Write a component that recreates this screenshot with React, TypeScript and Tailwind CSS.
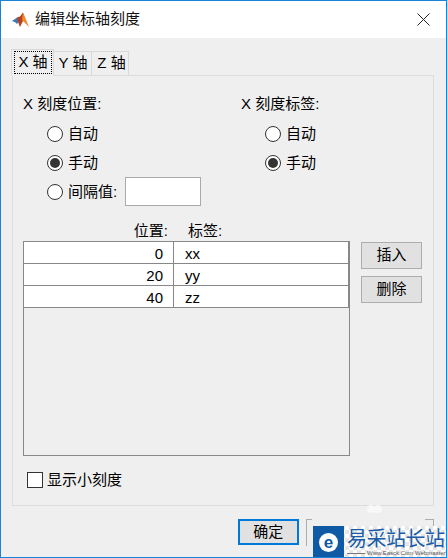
import React from "react";

const font = "font-['Liberation_Sans','Noto_Sans_CJK_SC',sans-serif]";

const Radio = ({ checked, label }: { checked?: boolean; label: string }) => (
  <div className="flex h-[17px] items-center gap-[5px] text-[15px] leading-none text-black">
    <span className="flex size-[16px] items-center justify-center rounded-full border border-[#333] bg-white">
      {checked && <span className="size-[10px] rounded-full bg-[#333]" />}
    </span>
    <span>{label}</span>
  </div>
);

const Row = ({ pos, tag }: { pos: string; tag: string }) => (
  <div className="flex h-[22px] border-b border-r border-[#888] bg-white text-[15px] leading-[23px] text-black">
    <div className="w-[150px] shrink-0 border-r border-[#888] pr-[10px] text-right">{pos}</div>
    <div className="pl-[11px]">{tag}</div>
  </div>
);

const Logo = () => (
  <svg width="17" height="16" viewBox="0 0 17 16">
    <path d="M0 9 L5 5.5 L8 7.5 L5 12 L3.5 10.5 Z" fill="#3a7cb5" />
    <path d="M5 5.5 L8 4.5 L11 0.5 L12 7 L8 15 L6 10 Z" fill="#b8401f" />
    <path d="M11 0.5 L13 5 L17 15 L13 11 L10 8 Z" fill="#ee8a2c" />
  </svg>
);

export default function App() {
  return (
    <div className={`${font} relative flex h-[558px] w-[447px] flex-col overflow-hidden border border-[#1883d7] bg-[#efefef]`}>
      <div className="flex h-[37px] shrink-0 items-center bg-white pl-[11px] pr-[8px]">
        <Logo />
        <span className="ml-[6px] text-[15px] text-[#111]">编辑坐标轴刻度</span>
        <svg className="ml-auto mr-[8px]" width="13" height="13" viewBox="0 0 13 13">
          <path d="M0.5 0.5 L12.5 12.5 M12.5 0.5 L0.5 12.5" stroke="#222" strokeWidth="1" />
        </svg>
      </div>

      <div className="flex flex-col pl-[11px] pr-[12px] pt-[11px]">
        <div className="-ml-px flex h-[26px] items-end text-[15px] text-black">
          <div className="z-10 -mb-px flex h-[27px] w-[43px] items-center justify-center border border-[#d9d9d9] border-b-[#efefef] bg-[#efefef]">
            <span className="flex h-[23px] w-[38px] items-center justify-center whitespace-nowrap border border-dotted border-black pl-px">X 轴</span>
          </div>
          <div className="flex h-[24px] w-[38px] items-center justify-center whitespace-nowrap border border-l-0 border-b-0 border-[#d9d9d9] pl-px">Y 轴</div>
          <div className="flex h-[24px] w-[37px] items-center justify-center whitespace-nowrap border border-l-0 border-b-0 border-[#d9d9d9] pl-[3px]">Z 轴</div>
        </div>

        <div className="flex h-[431px] flex-col border border-[#dcdcdc] pl-[10px] pr-[11px]">
          <div className="flex pt-[18px]">
            <div className="w-[218px]">
              <div className="h-[20px] text-[15px] leading-[20px] text-black">X 刻度位置:</div>
              <div className="mt-[11px] flex flex-col pl-[24px]">
                <Radio label="自动" />
                <div className="mt-[12px]"><Radio checked label="手动" /></div>
                <div className="mt-[6px] flex items-center">
                  <Radio label="间隔值:" />
                  <div className="ml-[8px] h-[29px] w-[76px] border border-[#aaa] bg-white" />
                </div>
              </div>
            </div>
            <div>
              <div className="h-[20px] text-[15px] leading-[20px] text-black">X 刻度标签:</div>
              <div className="mt-[11px] flex flex-col pl-[24px]">
                <Radio label="自动" />
                <div className="mt-[12px]"><Radio checked label="手动" /></div>
              </div>
            </div>
          </div>

          <div className="mt-[16px] flex h-[17px] text-[15px] leading-[17px] text-black">
            <div className="w-[145px] text-right">位置:</div>
            <div className="ml-[20px]">标签:</div>
          </div>

          <div className="mt-[2px] flex">
            <div className="h-[215px] w-[327px] shrink-0 border border-[#888]">
              <Row pos="0" tag="xx" />
              <Row pos="20" tag="yy" />
              <Row pos="40" tag="zz" />
            </div>
            <div className="ml-[11px] flex flex-col gap-[7px] pt-px">
              <button className="h-[27px] w-[61px] border border-[#adadad] bg-[#e1e1e1] text-[15px] text-black">插入</button>
              <button className="h-[27px] w-[61px] border border-[#adadad] bg-[#e1e1e1] text-[15px] text-black">删除</button>
            </div>
          </div>

          <div className="mt-[13px] flex items-center gap-[4px] pl-[4px] text-[15px] text-black">
            <span className="size-[16px] border border-[#333] bg-white" />
            <span>显示小刻度</span>
          </div>
        </div>

        <div className="mt-[13px] flex">
          <button className="ml-[226px] h-[26px] w-[61px] border-2 border-[#0078d7] bg-[#e1e1e1] text-[15px] text-black">确定</button>
          <div className="relative ml-[7px] h-[27px] w-[129px] border-x border-[#adadad]">
            <span className="absolute left-0 top-0 h-px w-[5px] bg-[#adadad]" />
            <span className="absolute right-0 top-0 h-px w-[8px] bg-[#adadad]" />
          </div>
        </div>
      </div>

      {/* leftovers of the watermark on the panel edge */}
      <span className="absolute left-[366px] top-[504px] size-[8px] rounded-full bg-[#f8f8f8]" />
      <span className="absolute left-[373px] top-[504px] size-[8px] rounded-full bg-[#f8f8f8]" />

      <div className="absolute bottom-[-1px] right-[-1px] flex h-[32px] w-[134px] bg-[repeating-conic-gradient(#e6e6e6_0_25%,#ffffff_0_50%)] bg-[length:8px_8px]">
        <div className="flex h-[32px] w-[31px] shrink-0 items-center justify-center bg-[#0f5aa5]">
          <span className="flex size-[19px] items-center justify-center rounded-full bg-white text-[17px] font-bold leading-none text-[#0f5aa5]">e</span>
        </div>
        <div className="flex flex-col pl-[3px] pt-[2px]">
          <span className="whitespace-nowrap text-[20px] leading-[22px] tracking-[-0.5px] text-[#1a5ca8]">易采站长站</span>
          <div className="flex items-center gap-[2px]">
            <span className="h-px w-[18px] bg-[#777]" />
            <span className="whitespace-nowrap text-[6px] leading-[6px] text-[#555]">Www.Easck.Com Webmaster</span>
          </div>
        </div>
      </div>
    </div>
  );
}
